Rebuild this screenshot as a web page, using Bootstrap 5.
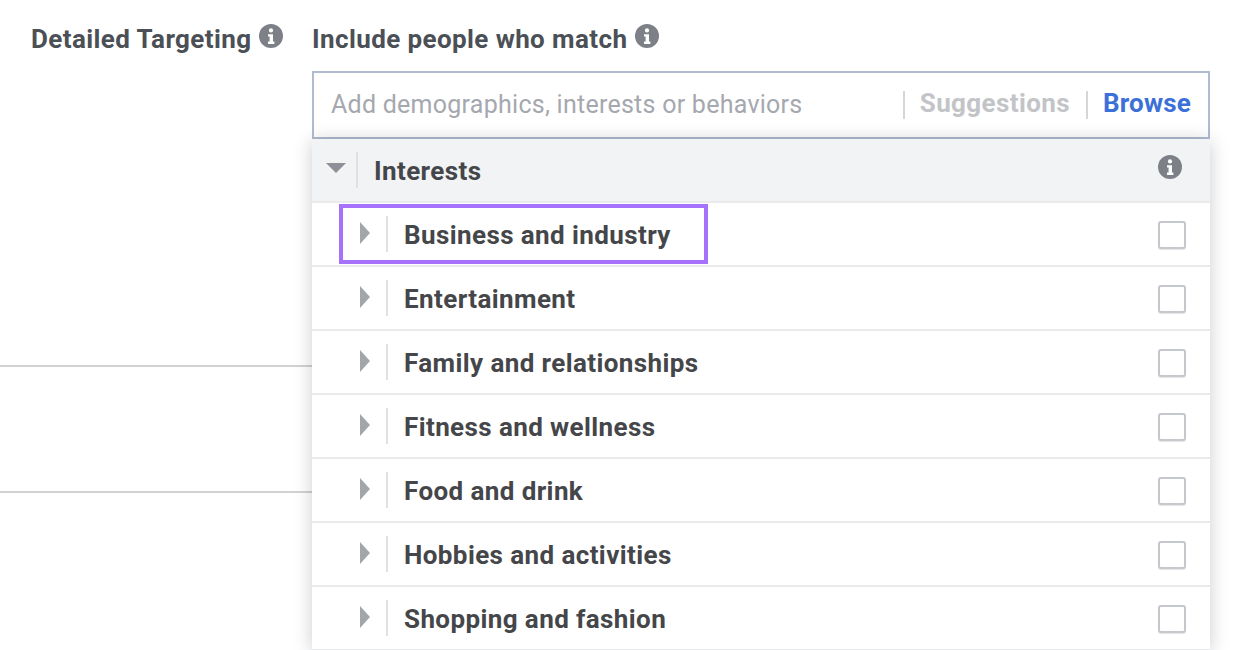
<!DOCTYPE html>
<html lang="en">
<head>
<meta charset="utf-8">
<title>Detailed Targeting</title>
<link rel="stylesheet" href="https://cdn.jsdelivr.net/npm/bootstrap@5.3.0/dist/css/bootstrap.min.css">
<style>
html,body{height:650px;overflow:hidden;background:#fff}
body{font-family:Roboto,"Liberation Sans",sans-serif;-webkit-font-smoothing:antialiased}
.shell{height:650px;overflow:hidden}
.side{width:312px;flex:none}
.side-label{padding:24px 0 0 31px;height:365px}
.head-text{font-size:26px;line-height:30px;font-weight:700;color:#4b4f56;letter-spacing:.4px}
.side-rule{height:2px;background:#d2d2d5}
.side-gap{height:124px}
.info{width:24px;height:24px;flex:none;display:block}
.main-col{width:898px;flex:none}
.main-head{padding-top:24px;height:71px}
.search-box{height:68px;border:2px solid #b0bbd0;padding:0 17px 0 17px}
.hint{font-size:25px;color:#a5a8ae;letter-spacing:.26px}
.vbar{width:2px;background:#d4d6da;height:28px;flex:none}
.suggest{font-size:26px;font-weight:700;color:#c2c4c8;letter-spacing:.38px;margin:-4px 16px 0 15px}
.browse{font-size:26px;font-weight:700;color:#3b70d8;letter-spacing:.2px;margin:-4px 0 0 15px;text-decoration:none}
.drop-panel{box-shadow:0 2px 18px rgba(0,0,0,.2);background:#fff;position:relative}
.drop-row{height:64px;border-bottom:2px solid #e9eaec;padding:0 24px 0 48px;background:#fff}
.drop-head{background:#f1f3f5;padding:0 28px 0 14px}
.tri-cell{width:26px;flex:none}
.tri-down{width:0;height:0;border-left:10px solid transparent;border-right:10px solid transparent;border-top:10px solid #8d9096;margin-top:-5px}
.tri-right{width:0;height:0;border-top:11px solid transparent;border-bottom:11px solid transparent;border-left:10px solid #a2a5aa;margin-top:-3px}
.row-bar{width:2px;height:36px;background:#dfe1e4;flex:none;margin-right:16px;margin-top:-1px}
.drop-head .tri-cell{width:30px}
.row-name{font-size:26px;line-height:30px;font-weight:700;color:#444649;letter-spacing:.4px;margin-top:1px}
.drop-head .info{margin-top:-6px}
.tick{width:28px;height:28px;border:2px solid #c4c7cc;border-radius:3px;background:#fff;flex:none;margin-top:2px;box-shadow:0 1px 1px rgba(0,0,0,.1)}
.focus-box{position:absolute;left:27px;top:65px;width:369px;height:60px;border:4px solid #a672fb;pointer-events:none}
</style>
</head>
<body>
<div class="shell d-flex">
  <div class="side">
    <div class="side-label d-flex align-items-start gap-2">
      <span class="head-text">Detailed Targeting</span>
      <svg class="info" viewBox="0 0 24 24"><circle cx="12" cy="12" r="12" fill="#7d8087"/><circle cx="12" cy="6.4" r="2.1" fill="#fff"/><path d="M9 10.2h5v7.4h1.4V20H9v-2.4h1.6v-5H9z" fill="#fff"/></svg>
    </div>
    <div class="side-rule"></div>
    <div class="side-gap"></div>
    <div class="side-rule"></div>
  </div>
  <div class="main-col">
    <div class="main-head d-flex align-items-start gap-2">
      <span class="head-text">Include people who match</span>
      <svg class="info" viewBox="0 0 24 24"><circle cx="12" cy="12" r="12" fill="#7d8087"/><circle cx="12" cy="6.4" r="2.1" fill="#fff"/><path d="M9 10.2h5v7.4h1.4V20H9v-2.4h1.6v-5H9z" fill="#fff"/></svg>
    </div>
    <div class="search-box d-flex align-items-center">
      <span class="hint flex-grow-1">Add demographics, interests or behaviors</span>
      <span class="vbar"></span>
      <span class="suggest">Suggestions</span>
      <span class="vbar"></span>
      <a class="browse" href="#">Browse</a>
    </div>
    <div class="drop-panel">
      <div class="drop-row drop-head d-flex align-items-center">
        <span class="tri-cell"><span class="tri-down d-block"></span></span>
        <span class="row-bar"></span>
        <span class="row-name flex-grow-1">Interests</span>
        <svg class="info" viewBox="0 0 24 24"><circle cx="12" cy="12" r="12" fill="#7d8087"/><circle cx="12" cy="6.4" r="2.1" fill="#fff"/><path d="M9 10.2h5v7.4h1.4V20H9v-2.4h1.6v-5H9z" fill="#fff"/></svg>
      </div>
      <div class="drop-row d-flex align-items-center"><span class="tri-cell"><span class="tri-right d-block"></span></span><span class="row-bar"></span><span class="row-name flex-grow-1">Business and industry</span><span class="tick"></span></div>
      <div class="drop-row d-flex align-items-center"><span class="tri-cell"><span class="tri-right d-block"></span></span><span class="row-bar"></span><span class="row-name flex-grow-1">Entertainment</span><span class="tick"></span></div>
      <div class="drop-row d-flex align-items-center"><span class="tri-cell"><span class="tri-right d-block"></span></span><span class="row-bar"></span><span class="row-name flex-grow-1">Family and relationships</span><span class="tick"></span></div>
      <div class="drop-row d-flex align-items-center"><span class="tri-cell"><span class="tri-right d-block"></span></span><span class="row-bar"></span><span class="row-name flex-grow-1">Fitness and wellness</span><span class="tick"></span></div>
      <div class="drop-row d-flex align-items-center"><span class="tri-cell"><span class="tri-right d-block"></span></span><span class="row-bar"></span><span class="row-name flex-grow-1">Food and drink</span><span class="tick"></span></div>
      <div class="drop-row d-flex align-items-center"><span class="tri-cell"><span class="tri-right d-block"></span></span><span class="row-bar"></span><span class="row-name flex-grow-1">Hobbies and activities</span><span class="tick"></span></div>
      <div class="drop-row d-flex align-items-center"><span class="tri-cell"><span class="tri-right d-block"></span></span><span class="row-bar"></span><span class="row-name flex-grow-1">Shopping and fashion</span><span class="tick"></span></div>
      <div class="focus-box"></div>
    </div>
  </div>
</div>
<script src="https://cdn.jsdelivr.net/npm/bootstrap@5.3.0/dist/js/bootstrap.bundle.min.js"></script>
</body>
</html>
